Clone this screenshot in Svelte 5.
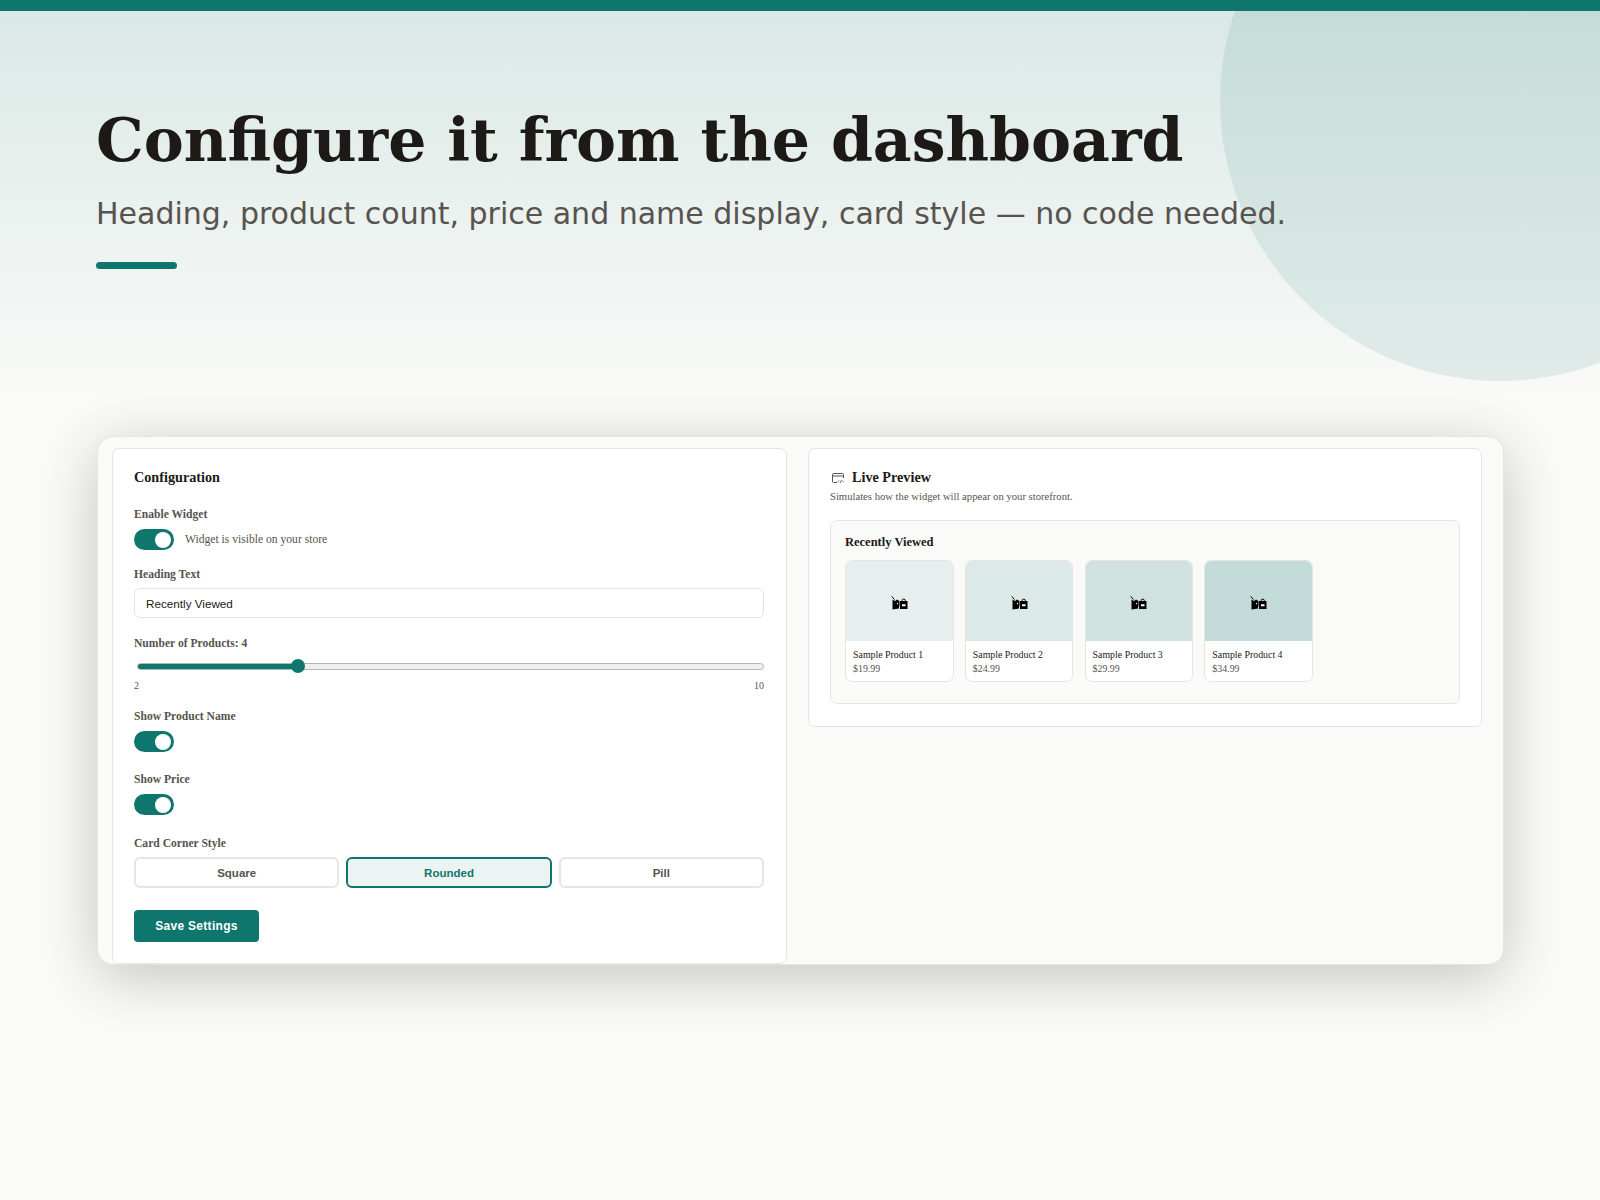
<script>
	const products = [
		{ name: 'Sample Product 1', price: '$19.99', tint: '#e6efed' },
		{ name: 'Sample Product 2', price: '$24.99', tint: '#dbe9e7' },
		{ name: 'Sample Product 3', price: '$29.99', tint: '#cfe2df' },
		{ name: 'Sample Product 4', price: '$34.99', tint: '#c4dcd9' },
	];
	const corners = ['Square', 'Rounded', 'Pill'];
</script>

<div class="page">
	<div class="topbar"></div>
	<div class="circle"></div>
	<header class="hero">
		<h1>Configure it from the dashboard</h1>
		<p>Heading, product count, price and name display, card style — no code needed.</p>
		<div class="rule"></div>
	</header>

	<main class="shot">
		<section class="panel config">
			<h2>Configuration</h2>

			<div class="label first">Enable Widget</div>
			<div class="toggle-row">
				<span class="toggle"></span>
				<span class="hint">Widget is visible on your store</span>
			</div>

			<div class="label heading-label">Heading Text</div>
			<input class="text" type="text" value="Recently Viewed" />

			<div class="label count-label">Number of Products: 4</div>
			<input class="range" type="range" min="2" max="10" value="4" />
			<div class="range-ends"><span>2</span><span>10</span></div>

			<div class="label name-label">Show Product Name</div>
			<span class="toggle"></span>

			<div class="label price-label">Show Price</div>
			<span class="toggle"></span>

			<div class="label corner-label">Card Corner Style</div>
			<div class="corners">
				{#each corners as c}
					<button class="corner" class:active={c === 'Rounded'}>{c}</button>
				{/each}
			</div>

			<button class="save">Save Settings</button>
		</section>

		<section class="panel preview">
			<div class="preview-title">
				<svg width="14" height="14" viewBox="0 0 14 14" fill="none" stroke="#57534e" stroke-width="1">
					<path d="M6 11.5H2.5a1 1 0 0 1-1-1v-7a1 1 0 0 1 1-1h9a1 1 0 0 1 1 1V7" />
					<path d="M1.5 5h11" />
					<path d="M8 9.5l-1 1 1 1M11.5 9.5l1 1-1 1M10.4 9l-1 3" stroke-width="0.8" />
				</svg>
				<h2>Live Preview</h2>
			</div>
			<p class="sub">Simulates how the widget will appear on your storefront.</p>
			<div class="widget">
				<h3>Recently Viewed</h3>
				<div class="cards">
					{#each products as p}
						<div class="card">
							<div class="thumb" style="background: {p.tint}">
								<svg width="17" height="14" viewBox="0 0 17 14">
									<path d="M.8 .3l2.6 3.2" stroke="#000" fill="none" />
									<path d="M1.5 3.5l2.5 1.5 2-1.5 2.5 1.5v5.5H8v2l-6.5 1z" fill="#000" />
									<path d="M6 7h1v1.2H6z" fill="#fff" />
									<path d="M9 5h7.5v8H9z" fill="#000" />
									<path d="M11 4.8a1.7 1.7 0 0 1 3.4 0" stroke="#000" fill="none" />
									<path d="M11 8.2h3.5v2.1H11z" fill="#fff" />
								</svg>
							</div>
							<div class="info">
								<div class="name">{p.name}</div>
								<div class="price">{p.price}</div>
							</div>
						</div>
					{/each}
				</div>
			</div>
		</section>
	</main>
</div>

<style>
	:global(body) {
		margin: 0;
		background: #fafaf8;
	}

	.page {
		position: relative;
		width: 1600px;
		height: 1200px;
		overflow: hidden;
		background: linear-gradient(180deg, #d9e8e5 0, #fafaf8 400px);
		font-family: "Liberation Serif", serif;
		color: #1c1917;
	}

	.topbar {
		height: 11px;
		background: #0f766e;
	}

	.circle {
		position: absolute;
		top: -179px;
		right: -180px;
		width: 560px;
		height: 560px;
		border-radius: 50%;
		background: rgba(15, 118, 110, 0.1);
	}

	.hero {
		position: relative;
		padding: 89px 96px 0;
	}

	.hero h1 {
		margin: 0;
		font-family: "DejaVu Serif", serif;
		font-size: 60px;
		line-height: 80px;
		font-weight: 700;
	}

	.hero p {
		margin: 11px 0 0;
		font-family: "DejaVu Sans", sans-serif;
		font-size: 30px;
		line-height: 45px;
		color: #57534e;
	}

	.rule {
		width: 81px;
		height: 7px;
		margin-top: 26px;
		border-radius: 4px;
		background: #0f766e;
	}

	.shot {
		position: relative;
		display: grid;
		grid-template-columns: 675px 674px;
		gap: 21px;
		align-items: start;
		width: 1407px;
		height: 529px;
		box-sizing: border-box;
		margin: 167px 0 0 97px;
		padding: 11px 20px 0 14px;
		background: #fafaf8;
		border: 1px solid #e7e5e4;
		border-radius: 16px;
		box-shadow: 0 12px 60px rgba(0, 0, 0, 0.22);
	}

	.panel {
		box-sizing: border-box;
		background: #fff;
		border: 1px solid #e7e5e4;
		border-radius: 7px;
	}

	.config {
		height: 516px;
		padding: 20px 21px;
		display: flex;
		flex-direction: column;
		align-items: flex-start;
	}

	h2 {
		margin: 0;
		font-size: 14.2px;
		line-height: 17px;
		font-weight: 700;
		color: #1c1917;
	}

	.label {
		font-size: 11.6px;
		line-height: 14px;
		font-weight: 700;
		color: #57534e;
	}

	.first { margin-top: 22px; }
	.heading-label { margin-top: 18px; }
	.count-label { margin-top: 19px; }
	.name-label { margin-top: 18px; }
	.price-label { margin-top: 21px; }
	.corner-label { margin-top: 22px; }

	.toggle-row {
		display: flex;
		align-items: center;
		gap: 11px;
	}

	.toggle {
		position: relative;
		display: block;
		flex-shrink: 0;
		width: 40px;
		height: 21px;
		margin-top: 7px;
		border-radius: 11px;
		background: #0f766e;
	}

	.toggle::after {
		content: '';
		position: absolute;
		top: 3px;
		right: 3px;
		width: 16px;
		height: 16px;
		border-radius: 50%;
		background: #fff;
	}

	.hint {
		margin-top: 7px;
		font-size: 11.6px;
		color: #57534e;
	}

	.text {
		box-sizing: border-box;
		width: 630px;
		height: 30px;
		margin-top: 6px;
		padding: 0 11px;
		border: 1px solid #e7e5e4;
		border-radius: 6px;
		font-family: "Liberation Sans", sans-serif;
		font-size: 11.7px;
		color: #1c1917;
		background: #fff;
	}

	.range {
		appearance: none;
		display: block;
		box-sizing: border-box;
		width: 630px;
		height: 14px;
		margin: 8px 0 0;
		background: transparent;
	}

	.range::-webkit-slider-runnable-track {
		height: 7px;
		border-radius: 4px;
		margin-left: 3px;
		background: linear-gradient(90deg, #0f766e 25.5%, #efefef 25.5%);
		border: 1px solid #b5b5b5;
		box-sizing: border-box;
	}

	.range::-webkit-slider-thumb {
		appearance: none;
		width: 14px;
		height: 14px;
		margin-top: -4.5px;
		border-radius: 50%;
		background: #0f766e;
	}

	.range-ends {
		display: flex;
		justify-content: space-between;
		width: 630px;
		margin-top: 7px;
		font-size: 10px;
		line-height: 12px;
		color: #57534e;
	}

	.corners {
		display: grid;
		grid-template-columns: repeat(3, 1fr);
		gap: 7px;
		width: 630px;
		margin-top: 6px;
	}

	.corner {
		height: 31px;
		padding: 0;
		border: 2px solid #e7e5e4;
		border-radius: 6px;
		background: #fff;
		font-family: "Liberation Sans", sans-serif;
		font-size: 11.5px;
		font-weight: 700;
		color: #57534e;
	}

	.corner.active {
		border-color: #0f766e;
		background: #ecf4f3;
		color: #0f766e;
	}

	.save {
		width: 125px;
		height: 32px;
		margin-top: 22px;
		padding: 0;
		border: 0;
		border-radius: 4px;
		background: #0f766e;
		font-family: "Liberation Sans", sans-serif;
		font-size: 12px;
		font-weight: 700;
		letter-spacing: 0.3px;
		color: #fff;
	}

	.preview {
		height: 279px;
		padding: 20px 21px;
	}

	.preview-title {
		display: flex;
		align-items: center;
		gap: 7px;
		padding-left: 1px;
	}

	.sub {
		margin: 4px 0 0;
		font-size: 10.65px;
		line-height: 13px;
		color: #57534e;
	}

	.widget {
		box-sizing: border-box;
		height: 184px;
		margin-top: 17px;
		padding: 13px 14px;
		background: #fafaf8;
		border: 1px solid #e7e5e4;
		border-radius: 7px;
	}

	h3 {
		margin: 0;
		font-size: 12.5px;
		line-height: 16px;
		font-weight: 700;
		color: #1c1917;
	}

	.cards {
		display: flex;
		gap: 11.1px;
		margin-top: 10px;
	}

	.card {
		box-sizing: border-box;
		width: 108.7px;
		height: 122px;
		overflow: hidden;
		background: #fff;
		border: 1px solid #e7e5e4;
		border-radius: 7px;
	}

	.thumb {
		display: flex;
		align-items: center;
		justify-content: center;
		height: 80px;
	}

	.thumb svg {
		margin-top: 3px;
	}

	.info {
		padding: 7px;
		font-size: 9.9px;
		line-height: 14px;
	}

	.price {
		color: #57534e;
	}
</style>
